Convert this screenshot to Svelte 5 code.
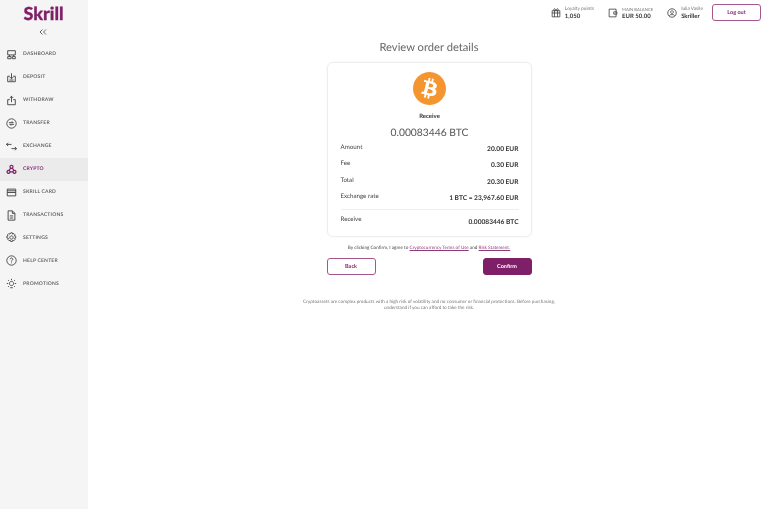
<script>
  const nav = [
    { label: 'DASHBOARD', d: 'M2 2h9v5H2zM2 9h4v2.500H2zM7.500 9H11v2.500H7.500zM4 7v2M9 7v2' },
    { label: 'DEPOSIT', d: 'M2 5h2.500M8.500 5H11v6.500H2V5M6.500 1.500V8M4.500 6l2 2 2-2M4 9.500h5' },
    { label: 'WITHDRAW', d: 'M2 5.500h2.500M8.500 5.500H11v6H2v-6M6.500 8.500V1.500M4.500 3.500l2-2 2 2' },
    { label: 'TRANSFER', d: 'M6.500 1a5.500 5.500 0 1 0 .01 0zM3.500 5.500h5L7 4M9.500 7.500h-5L6 9' },
    { label: 'EXCHANGE', d: 'M.5 4h6M2.500 2l-2 2 2 2M6.500 9h6M10.500 7l2 2-2 2' },
    { label: 'CRYPTO', d: 'M6.500 1.500a1.800 1.800 0 1 0 .01 0zM3 7.500a1.800 1.800 0 1 0 .01 0zM10 7.500a1.800 1.800 0 1 0 .01 0zM5.500 4.800 3.800 7.600M7.500 4.800l1.700 2.800M4.800 9.300h3.400', active: true },
    { label: 'SKRILL CARD', d: 'M1.500 2.500h10v8h-10zM1.500 4.500h10M1.500 6.500h10' },
    { label: 'TRANSACTIONS', d: 'M2.500 1h5l3 3v8h-8zM7.500 1v3h3M4.500 7h4M4.500 9.500h4' },
    { label: 'SETTINGS', d: 'M6.500 4.500a2 2 0 1 0 .01 0zM5.500 1h2l.4 1.500 1.400-.6 1.400 1.400-.6 1.400 1.400.4v2l-1.400.4.6 1.400-1.400 1.400-1.400-.6-.4 1.500h-2l-.4-1.500-1.400.6-1.400-1.400.6-1.400L1 7.100v-2l1.400-.4-.6-1.400 1.400-1.400 1.400.6z' },
    { label: 'HELP CENTER', d: 'M6.500 1a5.500 5.500 0 1 0 .01 0zM5 5a1.500 1.500 0 1 1 2.300 1.300C6.700 6.700 6.500 7 6.500 7.700M6.500 9v.8' },
    { label: 'PROMOTIONS', d: 'M6.500 4a2.500 2.500 0 1 0 .01 0zM6.500 1v1.500M2.500 2.500l1 1M10.500 2.500l-1 1M1 6.500h1.500M10.500 6.500H12M2.500 10.500l1-1M10.500 10.500l-1-1M5 11.500h3' }
  ];
  const rows = [
    ['Amount', '20.00 EUR'],
    ['Fee', '0.30 EUR'],
    ['Total', '20.30 EUR'],
    ['Exchange rate', '1 BTC = 23,967.60 EUR']
  ];
</script>

<div class="page">
  <aside class="side">
    <div class="logo">Skrill</div>
    <svg class="collapse" viewBox="0 0 8 6" width="8" height="6"><path d="M3.500.5 1 3l2.500 2.500M7 .5 4.500 3 7 5.500" /></svg>
    <nav class="nav">
      {#each nav as item}
        <div class="item" class:active={item.active}>
          <svg viewBox="0 0 13 13" width="11" height="11"><path d={item.d} /></svg>
          <span>{item.label}</span>
        </div>
      {/each}
    </nav>
  </aside>

  <main class="main">
    <header class="top">
      <div class="stat">
        <svg viewBox="0 0 13 13" width="10" height="10"><path d="M1.500 3.500h10v8h-10zM1.500 6.500h10M4.500 3.500v8M8.500 3.500v8M4.500 3.500C3 2.500 3.500 1 4.500 1s2 1.500 2 2.500c0-1 1-2.500 2-2.500s1.500 1.500 0 2.500" /></svg>
        <div class="stat-text"><small>Loyalty points</small><b>1,050</b></div>
      </div>
      <div class="stat">
        <svg viewBox="0 0 13 13" width="10" height="10"><path d="M1.500 1.500h9v10h-9zM11.500 5h-4v3h4z" /></svg>
        <div class="stat-text"><small class="caps">MAIN BALANCE</small><b>EUR 50.00</b></div>
      </div>
      <div class="stat">
        <svg viewBox="0 0 13 13" width="10" height="10"><path d="M6.500 1a5.500 5.500 0 1 0 .01 0zM6.500 3.500a1.800 1.800 0 1 0 .01 0zM3 10c1-2 6-2 7 0" /></svg>
        <div class="stat-text"><small>Iulia Vasile</small><b>Skriller</b></div>
      </div>
      <button class="btn outline logout">Log out</button>
    </header>

    <section class="content">
      <h1>Review order details</h1>
      <div class="card">
        <svg class="coin" viewBox="0 0 24 24" width="33" height="33">
          <circle cx="12" cy="12" r="10" fill="#fff" />
          <path fill="#f59530" d="M23.638 14.904c-1.602 6.43-8.113 10.34-14.542 8.736C2.67 22.05-1.244 15.525.362 9.105 1.962 2.67 8.475-1.243 14.9.358c6.43 1.605 10.342 8.115 8.738 14.548v-.002zm-6.35-4.613c.24-1.59-.974-2.45-2.64-3.03l.54-2.153-1.315-.33-.525 2.107c-.345-.087-.705-.167-1.064-.25l.526-2.127-1.32-.33-.54 2.165c-.285-.067-.565-.132-.84-.2l-1.815-.45-.35 1.407s.975.225.955.236c.535.136.63.486.615.766l-1.477 5.92c-.075.166-.24.406-.614.314.015.02-.96-.24-.96-.24l-.66 1.51 1.71.426.93.242-.54 2.19 1.32.327.54-2.17c.36.1.705.19 1.05.273l-.51 2.154 1.32.33.545-2.19c2.24.427 3.93.257 4.64-1.774.57-1.637-.03-2.58-1.217-3.196.854-.193 1.5-.76 1.68-1.93h.01zm-3.01 4.22c-.404 1.64-3.157.75-4.05.53l.72-2.9c.896.23 3.757.67 3.33 2.37zm.41-4.24c-.37 1.49-2.662.735-3.405.55l.654-2.64c.744.18 3.137.524 2.75 2.084v.006z" />
        </svg>
        <div class="recv">Receive</div>
        <div class="amt">0.00083446 BTC</div>
        <div class="rows">
          {#each rows as r}
            <div class="row"><span>{r[0]}</span><b>{r[1]}</b></div>
          {/each}
        </div>
        <div class="row last"><span>Receive</span><b>0.00083446 BTC</b></div>
      </div>
      <p class="terms">By clicking Confirm, I agree to <u>Cryptocurrency Terms of Use</u> and <u>Risk Statement.</u></p>
      <div class="actions">
        <button class="btn outline">Back</button>
        <button class="btn solid">Confirm</button>
      </div>
      <p class="note">Cryptoassets are complex products with a high risk of volatility and no consumer or financial protections. Before purchasing,<br />understand if you can afford to take the risk.</p>
    </section>
  </main>
</div>

<style>
  :global(body) { margin: 0; background: #fff; }
  .page { display: flex; width: 765px; height: 509px; overflow: hidden; font-family: Lato, "Open Sans", sans-serif; color: #333; text-rendering: geometricPrecision; will-change: transform; }
  .side { width: 88px; flex: none; background: #f5f5f5; display: flex; flex-direction: column; }
  .logo { font-weight: 900; font-size: 18px; line-height: 18px; color: #7f1f68; text-align: center; margin-top: 4px; padding-right: 1px; -webkit-text-stroke: .3px #7f1f68; }
  .collapse { margin: 7px 0 0 39px; }
  .collapse path { fill: none; stroke: #555; stroke-width: .9; }
  .nav { margin-top: 8px; display: flex; flex-direction: column; }
  .item { height: 22.950px; display: flex; align-items: center; gap: 6px; padding-left: 6px; font-size: 5px; font-weight: 700; letter-spacing: .2px; color: #666; }
  .item svg { flex: none; }
  .item path { fill: none; stroke: #444; stroke-width: 1.100; }
  .item.active { background: #ebebeb; color: #7f1f68; }
  .item.active path { stroke: #7f1f68; stroke-width: 1.400; }
  .main { flex: 1; min-width: 0; display: flex; flex-direction: column; }
  .top { height: 25px; display: flex; align-items: center; justify-content: flex-end; padding-right: 4px; gap: 14px; }
  .stat { display: flex; align-items: center; gap: 4px; }
  .stat svg { flex: none; }
  .stat path { fill: none; stroke: #333; stroke-width: 1; }
  .stat-text { padding-top: 1px; }
  .stat small { display: block; font-size: 4.800px; line-height: 7px; color: #777; }
  .stat small.caps { font-size: 4.200px; }
  .stat b { display: block; font-size: 6px; line-height: 8px; font-weight: 700; color: #333; }
  .btn { box-sizing: border-box; width: 49px; height: 17px; border-radius: 3px; font: 700 5.500px Lato, sans-serif; padding: 0; text-rendering: geometricPrecision; }
  .outline { background: #fff; border: 1px solid #a5568f; color: #7f1f68; }
  .solid { background: #7f1f68; border: 1px solid #7f1f68; color: #fff; }
  .logout { margin-left: -5px; }
  .content { width: 260px; margin-left: 211px; display: flex; flex-direction: column; align-items: center; }
  h1 { font-weight: 400; font-size: 11.200px; line-height: 16px; margin: 15px 0 6px; color: #666; }
  .card { box-sizing: border-box; width: 205px; height: 175px; border: 1px solid #eee; border-radius: 6px; box-shadow: 0 0 2px #eee; padding: 9px 12px 0 13px; display: flex; flex-direction: column; align-items: center; }
  .coin { flex: none; }
  .recv { font-size: 6px; font-weight: 700; line-height: 8px; margin-top: 8px; color: #333; }
  .amt { font-size: 10.300px; line-height: 16px; margin-top: 4px; color: #555; }
  .rows { width: 100%; display: flex; flex-direction: column; }
  .row { width: 100%; height: 16.400px; display: flex; justify-content: space-between; align-items: flex-start; box-sizing: border-box; font-size: 6.200px; }
  .row span { line-height: 8px; color: #444; margin-top: 3px; }
  .row b { font-size: 6.600px; font-weight: 700; line-height: 9px; margin-top: 4px; color: #333; }
  .row.last { border-top: 1px solid #eee; margin-top: 2px; height: 20px; }
  .row.last span { margin-top: 6px; }
  .row.last b { margin-top: 8px; }
  .terms { font-size: 4.650px; line-height: 7px; margin: 7px 0 0; color: #444; white-space: nowrap; }
  .terms u { color: #8f3a78; text-decoration-thickness: .4px; }
  .actions { width: 205px; display: flex; justify-content: space-between; margin-top: 7px; }
  .note { font-size: 4.670px; line-height: 6px; color: #777; text-align: center; margin: 23px 0 0; width: 270px; white-space: nowrap; }
</style>
